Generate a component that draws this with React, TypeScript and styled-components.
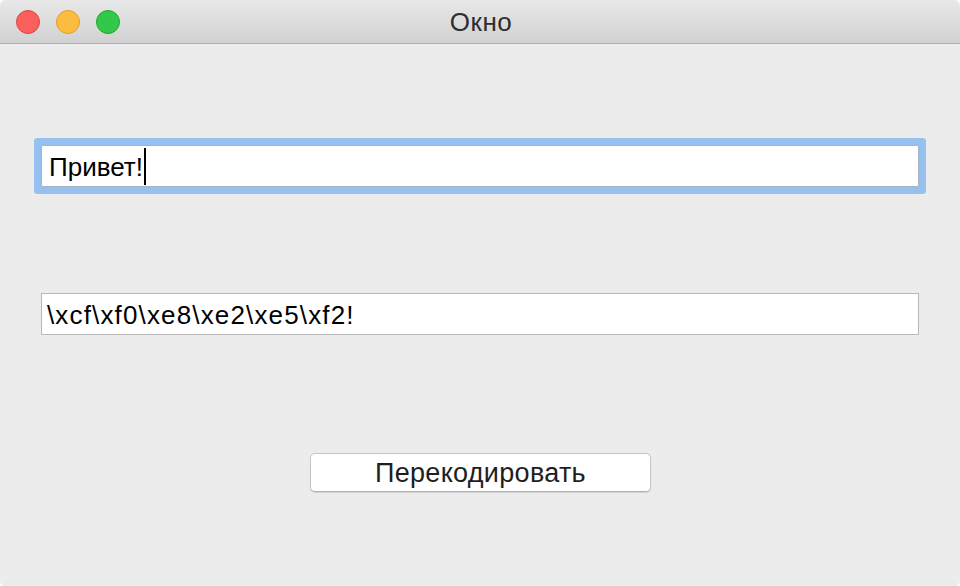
import React from "react";
import styled, { createGlobalStyle } from "styled-components";

const Global = createGlobalStyle`
  html, body { margin: 0; padding: 0; background: #ffffff; }
  body { font-family: "Liberation Sans", Arial, sans-serif; }
  * { box-sizing: border-box; }
`;

const Window = styled.div`
  width: 960px;
  height: 586px;
  background: #ececec;
  border-radius: 6px 6px 5px 5px;
  overflow: hidden;
  display: flex;
  flex-direction: column;
`;

const TitleBar = styled.div`
  height: 44px;
  flex: none;
  position: relative;
  display: flex;
  align-items: center;
  justify-content: center;
  background: linear-gradient(#e9e8e9, #d2d1d2);
  border-bottom: 1px solid #b3b3b3;
`;

const Lights = styled.div`
  position: absolute;
  left: 16px;
  top: 10px;
  display: flex;
  gap: 16px;
`;

const Light = styled.span<{ $fill: string; $edge: string }>`
  width: 24px;
  height: 24px;
  border-radius: 50%;
  background: ${(p) => p.$fill};
  border: 1px solid ${(p) => p.$edge};
`;

const Title = styled.div`
  font-size: 26px;
  letter-spacing: 0.5px;
  color: #2e2e2e;
  line-height: 1;
  margin-top: 1px;
  margin-left: 2px;
`;

const Content = styled.div`
  flex: 1;
  display: flex;
  flex-direction: column;
  padding: 101px 41px 0 41px;
`;

const Field = styled.div<{ $focused?: boolean }>`
  height: 42px;
  background: #ffffff;
  border: 1px solid ${(p) => (p.$focused ? "#a9b4c2" : "#b8b8b8")};
  box-shadow: ${(p) => (p.$focused ? "0 0 0 7px #95c0ef" : "none")};
  border-radius: ${(p) => (p.$focused ? "1px" : "0")};
  display: flex;
  align-items: center;
  font-size: 26px;
  color: #000;
  white-space: nowrap;
`;

const FocusWrap = styled.div`
  border-radius: 6px;
`;

const FieldText = styled.span<{ $pad: number; $spacing?: number }>`
  padding-left: ${(p) => p.$pad}px;
  padding-top: 2px;
  letter-spacing: ${(p) => p.$spacing ?? 0}px;
`;

const Caret = styled.span`
  display: inline-block;
  width: 2px;
  height: 37px;
  background: #000;
  margin-left: 1px;
`;

const Spacer = styled.div<{ $h: number }>`
  height: ${(p) => p.$h}px;
  flex: none;
`;

const ButtonRow = styled.div`
  display: flex;
  justify-content: center;
`;

const Button = styled.button`
  width: 341px;
  height: 39px;
  background: #ffffff;
  border: 1px solid #c6c6c6;
  border-bottom-color: #b0b0b0;
  border-radius: 5px;
  box-shadow: 0 1px 1px rgba(0, 0, 0, 0.12);
  font-family: "Liberation Sans", Arial, sans-serif;
  font-size: 27px;
  letter-spacing: 0.3px;
  color: #1e1e1e;
  padding: 2px 0 0 0;
  margin-left: 1px;
`;

export default function App() {
  return (
    <>
      <Global />
      <Window>
        <TitleBar>
          <Lights>
            <Light $fill="#fc605c" $edge="#e0443e" />
            <Light $fill="#fdbc40" $edge="#dea123" />
            <Light $fill="#34c84a" $edge="#1aab29" />
          </Lights>
          <Title>Окно</Title>
        </TitleBar>
        <Content>
          <FocusWrap>
            <Field $focused>
              <FieldText $pad={7}>Привет!</FieldText>
              <Caret />
            </Field>
          </FocusWrap>
          <Spacer $h={106} />
          <Field>
            <FieldText $pad={5} $spacing={1.15}>
              \xcf\xf0\xe8\xe2\xe5\xf2!
            </FieldText>
          </Field>
          <Spacer $h={118} />
          <ButtonRow>
            <Button>Перекодировать</Button>
          </ButtonRow>
        </Content>
      </Window>
    </>
  );
}
